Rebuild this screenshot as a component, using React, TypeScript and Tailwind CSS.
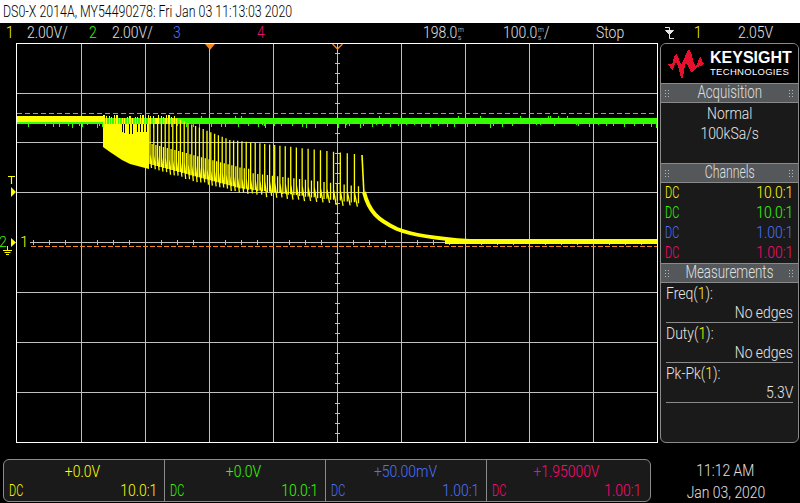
import type { ReactNode } from 'react';

const font = { fontFamily: 'Roboto, "Liberation Sans", sans-serif' };

const vLines = [81, 145, 209, 273, 337, 401, 465, 529, 593];
const hLines = [93, 142, 192, 292, 342, 392];

// small seeded random so the trace is the same every run
function makeRandom(seed: number) {
  let s = seed;
  return () => {
    s = (s * 16807) % 2147483647;
    return s / 2147483647;
  };
}

function lowerEdge(x: number) {
  if (x < 150) return 148 + ((x - 104) / 46) * 20;
  if (x < 240) return 168 + ((x - 150) / 90) * 24;
  return 192 + ((x - 240) / 120) * 15;
}

function upperEdge(x: number) {
  if (x < 176) return 118;
  if (x < 230) return 118 + ((x - 176) / 54) * 22;
  return 140 + ((x - 230) / 133) * 15;
}

function buildTrace() {
  const rand = makeRandom(77);
  const parts: string[] = [];
  let x = 150;
  while (x < 361) {
    const gap = x < 230 ? 3.8 : 4 + ((x - 230) / 130) * 3.5;
    const top = upperEdge(x);
    const low = lowerEdge(x);
    parts.push(`M${x} ${top}V${low - 4}`);
    parts.push(`M${x} ${low - 14}L${x + gap * 0.4} ${low + rand() * 2}`);
    parts.push(`M${x + gap * 0.55} ${low - (gap > 4.5 ? 20 : 24)}V${low - 3}`);
    x += gap;
  }
  return parts.join('');
}

// yellow fuzz over the green band at the start of the burst
function buildBurstTop() {
  const rand = makeRandom(19);
  const parts: string[] = [];
  for (let x = 104; x < 176; x += 2.6) parts.push(`M${x} ${115 + rand() * 3}V124`);
  return parts.join('');
}

const burstSlits = [122, 124.5, 129, 132, 137, 140, 143, 146];

function buildNoise() {
  const rand = makeRandom(311);
  const parts: string[] = [];
  for (let x = 17; x < 657; x += 1 + rand() * 11) {
    const up = rand() < 0.12;
    parts.push(`M${Math.round(x)} ${up ? 116 : 124}v${up ? 2 : 1 + Math.round(rand() * 3)}`);
  }
  return parts.join('');
}

const centerTicks: number[] = [];
for (let y = 53; y < 442; y += 10) if ((y - 43) % 50 !== 0) centerTicks.push(y);
const axisTicks: number[] = [];
for (let x = 33; x < 657; x += 16) axisTicks.push(x);

function ScopeGrid() {
  return (
    <svg width="660" height="400" viewBox="0 43 660 400" className="block shrink-0">
      <g stroke="#c0c0c0" strokeWidth="1" shapeRendering="crispEdges">
        {vLines.map((x) => (
          <path key={x} d={`M${x + 0.5} 43V442`} />
        ))}
        {hLines.map((y) => (
          <path key={y} d={`M16 ${y + 0.5}H657`} />
        ))}
        <path d="M30 242.5H657" />
        {centerTicks.map((y) => (
          <path key={y} d={`M335 ${y + 0.5}H340`} />
        ))}
        {axisTicks.map((x) => (
          <path key={x} d={`M${x + 0.5} 240V245`} />
        ))}
      </g>
      <path d="M16.5 43V442.5H657.5V43.5H16" fill="none" stroke="#fff" shapeRendering="crispEdges" />

      {/* trigger and cursor lines */}
      <path d="M17 113.5H657" stroke="#f0891f" strokeDasharray="5 3" />
      <path d="M31 246.5H657" stroke="#f0891f" strokeDasharray="5 2" />

      {/* channel 2 */}
      <rect x="17" y="118" width="640" height="6" fill="#33ff00" />
      <path d={buildNoise()} stroke="#33ff00" fill="none" shapeRendering="crispEdges" />

      {/* channel 1 */}
      <rect x="17" y="116" width="87" height="6" fill="#ffff00" />
      <path d={buildBurstTop()} stroke="#ffff00" strokeWidth="1.2" fill="none" shapeRendering="crispEdges" />
      <path d="M103 124H149V169L130 164L122 160L110 152L103 147Z" fill="#ffff00" />
      <g stroke="#000" strokeWidth="1" shapeRendering="crispEdges">
        {burstSlits.map((x) => (
          <path key={x} d={`M${x} 124V${134 - (x % 3)}`} />
        ))}
      </g>
      <path d={buildTrace()} stroke="#ffff00" strokeWidth="1.3" fill="none" />
      <path d="M362 155L364 195" stroke="#ffff00" strokeWidth="1.6" fill="none" />
      <path d="M364 192C369 212 378 220 397 229C412 235 440 239 470 241" stroke="#ffff00" strokeWidth="4" fill="none" />
      <rect x="445" y="239" width="212" height="5" fill="#ffff00" />

      {/* top markers */}
      <path d="M205 44H215L210 50Z" fill="#f0891f" />
      <path d="M332.5 44L337.5 49L342.5 44" fill="none" stroke="#f0891f" strokeWidth="1.3" />

      {/* left markers */}
      <path d="M8 176.5H15M11.5 176V184" stroke="#ffff00" strokeWidth="1.2" fill="none" />
      <path d="M11 187L16 192L11 197Z" fill="#ffff00" />
      <path d="M11 238L16 242.5L11 247Z" fill="#ffff00" />
      <text x="-1" y="247" fill="#33ff00" fontSize="14">2</text>
      <text x="20" y="247" fill="#ffff00" fontSize="15">1</text>
      <path d="M7.5 246V250M3 250.5H12M4.5 252.5H10.5M6 254.5H9" stroke="#ffff00" fill="none" />
    </svg>
  );
}

function KeysightWave() {
  return (
    <svg width="40" height="32" viewBox="0 0 40 32" className="block shrink-0" shapeRendering="crispEdges">
      <path
        d="M2 16L6 16C7.5 14 8 6 10 6C12 6 13 14 15 16C17 17 20 2 23 2C26 2 27 18 30 18C32 18 32 9 34 9C36 9 35.5 15 38 16C36 18 34 18 32 19C30 20 28 24 26 24C24 24 22 16 20 16C18 16 18 30 16 30C13.5 30 13 15 10 15C8 15 8 22 6 22C5 22 4 17 2 16Z"
        fill="#e8112d"
      />
    </svg>
  );
}

// the scope's bitmap font is much narrower than anything installed
function Narrow({ children, className = 'origin-left' }: { children: ReactNode; className?: string }) {
  return <span className={`inline-block whitespace-nowrap scale-x-[.82] ${className}`}>{children}</span>;
}

function Grip() {
  return (
    <svg width="5" height="7" viewBox="0 0 5 7" className="block" fill="#b8b8b8">
      <rect x="0" y="0" width="1" height="1" />
      <rect x="3" y="0" width="1" height="1" />
      <rect x="0" y="3" width="1" height="1" />
      <rect x="3" y="3" width="1" height="1" />
      <rect x="0" y="6" width="1" height="1" />
      <rect x="3" y="6" width="1" height="1" />
    </svg>
  );
}

function PanelHeader({ title, squeeze }: { title: string; squeeze: string }) {
  return (
    <div className="flex items-center justify-between h-[20px] px-[4px] bg-[#54585a] border-y border-[#8a8a8a] text-[#e0e0e0] text-[18px] leading-[16px]">
      <Grip />
      <span className={`inline-block whitespace-nowrap pb-[2px] ${squeeze}`}>{title}</span>
      <Grip />
    </div>
  );
}

function DcLabel() {
  return <span className="inline-block origin-left scale-x-[.64]">DC</span>;
}

function ChannelRow({ value, color }: { value: string; color: string }) {
  return (
    <div className={`flex justify-between h-[20px] items-center text-[17px] ${color}`}>
      <DcLabel />
      <Narrow className="origin-right">{value}</Narrow>
    </div>
  );
}

function Measurement({ name, value }: { name: string; value: string }) {
  return (
    <div className="border-b border-[#8a8a8a] h-[40px] text-[#e6e6e6] text-[17px]">
      <div className="h-[20px] leading-[20px]">
        <Narrow>
          {name}(<span className="text-[#ffff00]">1</span>):
        </Narrow>
      </div>
      <div className="h-[19px] leading-[19px] text-right">
        <Narrow className="origin-right">{value}</Narrow>
      </div>
    </div>
  );
}

function SidePanel() {
  return (
    <div className="w-[139px] h-[400px] border border-[#8a8a8a] rounded-[6px] bg-[#1a1a1a] overflow-hidden">
      <div className="h-[39px] bg-black flex items-center gap-[4px] pl-[5px]">
        <KeysightWave />
        <div className="text-white leading-none" style={{ fontFamily: '"Liberation Sans", sans-serif' }}>
          <div className="text-[16px] font-bold">KEYSIGHT</div>
          <div className="text-[9.5px] tracking-[0.3px] mt-[1px]">TECHNOLOGIES</div>
        </div>
      </div>
      <PanelHeader title="Acquisition" squeeze="scale-x-[.74]" />
      <div className="h-[60px] text-center text-[#e6e6e6] text-[17px] leading-[20px]">
        <div>
          <Narrow className="origin-center">Normal</Narrow>
        </div>
        <div>
          <Narrow className="origin-center">100kSa/s</Narrow>
        </div>
      </div>
      <PanelHeader title="Channels" squeeze="scale-x-[.68]" />
      <div className="h-[80px] pl-[4px] pr-[5px]">
        <ChannelRow value="10.0:1" color="text-[#ffff00]" />
        <ChannelRow value="10.0:1" color="text-[#33ff00]" />
        <ChannelRow value="1.00:1" color="text-[#4d72ff]" />
        <ChannelRow value="1.00:1" color="text-[#ff0a78]" />
      </div>
      <PanelHeader title="Measurements" squeeze="scale-x-[.74]" />
      <div className="px-[5px]">
        <Measurement name="Freq" value="No edges" />
        <Measurement name="Duty" value="No edges" />
        <Measurement name="Pk-Pk" value="5.3V" />
      </div>
    </div>
  );
}

function TimeUnit() {
  return (
    <span className="inline-flex flex-col align-middle text-[8px] leading-[8px] ml-[1px]">
      <span>m</span>
      <span>s</span>
    </span>
  );
}

function TriggerIcon() {
  return (
    <svg width="9" height="14" viewBox="0 0 9 14" className="block" fill="none" stroke="#e8e8e8">
      <path d="M0 1.5H4.5V12.5H9" />
      <path d="M0.5 4.5H8.5L4.5 8.5Z" fill="#e8e8e8" />
    </svg>
  );
}

function StatusBar() {
  return (
    <div className="h-[20px] flex items-center text-[17px] text-[#e0e0e0] whitespace-nowrap pl-[6px]">
      <span className="w-[21px] text-[#ffff00]"><Narrow>1</Narrow></span>
      <span className="w-[62px]"><Narrow>2.00V/</Narrow></span>
      <span className="w-[23px] text-[#33ff00]"><Narrow>2</Narrow></span>
      <span className="w-[61px]"><Narrow>2.00V/</Narrow></span>
      <span className="w-[84px] text-[#4d72ff]"><Narrow>3</Narrow></span>
      <span className="w-[166px] text-[#e0146e]"><Narrow>4</Narrow></span>
      <span className="w-[80px]">
        <Narrow>
          198.0
          <TimeUnit />
        </Narrow>
      </span>
      <span className="w-[93px]">
        <Narrow>
          100.0
          <TimeUnit />/
        </Narrow>
      </span>
      <span className="w-[69px]"><Narrow>Stop</Narrow></span>
      <span className="w-[29px]">
        <TriggerIcon />
      </span>
      <span className="w-[44px] text-[#ffff00]"><Narrow>1</Narrow></span>
      <span><Narrow>2.05V</Narrow></span>
    </div>
  );
}

const bottomChannels = [
  { offset: '+0.0V', probe: '10.0:1', color: 'text-[#ffff00]' },
  { offset: '+0.0V', probe: '10.0:1', color: 'text-[#33ff00]' },
  { offset: '+50.00mV', probe: '1.00:1', color: 'text-[#4d72ff]' },
  { offset: '+1.95000V', probe: '1.00:1', color: 'text-[#ff0a78]' },
];

export default function App() {
  return (
    <div className="w-[800px] h-[503px] bg-black overflow-hidden flex flex-col font-light" style={font}>
      <div className="h-[23px] bg-white text-black text-[17px] leading-[23px] pl-[3px] whitespace-nowrap">
        <span className="inline-block origin-left scale-x-[.728]">DS0-X 2014A, MY54490278: Fri Jan 03 11:13:03 2020</span>
      </div>

      <StatusBar />

      <div className="flex">
        <ScopeGrid />
        <SidePanel />
      </div>

      <div className="flex mt-[16px]">
        <div className="w-[648px] h-[43px] ml-[3px] flex border border-[#8a8a8a] rounded-[6px] bg-[#1a1a1a]">
          {bottomChannels.map((ch, i) => (
            <div
              key={i}
              className={`w-[161px] pl-[5px] pr-[7px] text-[17px] ${ch.color} ${i < 3 ? 'border-r border-[#8a8a8a]' : ''}`}
            >
              <div className="h-[21px] leading-[22px] text-center">
                <Narrow className="origin-center">{ch.offset}</Narrow>
              </div>
              <div className="flex justify-between leading-[19px]">
                <DcLabel />
                <Narrow className="origin-right">{ch.probe}</Narrow>
              </div>
            </div>
          ))}
        </div>
        <div className="flex-1 text-center text-[#e0e0e0] text-[17px] leading-[22px]">
          <div>
            <Narrow className="origin-center">11:12 AM</Narrow>
          </div>
          <div>
            <Narrow className="origin-center">Jan 03, 2020</Narrow>
          </div>
        </div>
      </div>
    </div>
  );
}
